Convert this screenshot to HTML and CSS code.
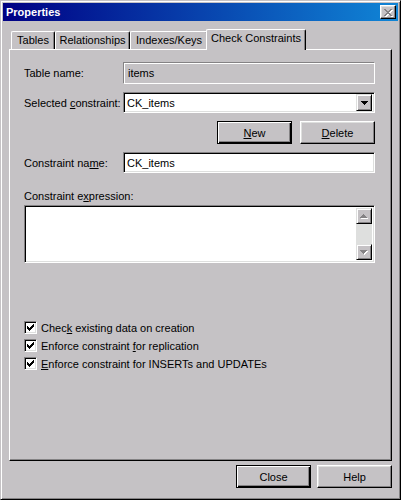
FILE: index.html
```html
<!DOCTYPE html>
<html lang="en">
<head>
  <meta charset="UTF-8">
  <title>Properties</title>
  <link rel="stylesheet" href="styles.css">
</head>
<body>

  <div class="window">
    <div class="titlebar">
      <span class="title">Properties</span>
      <span class="close-btn">
        <svg width="9" height="8" viewBox="0 0 9 8" shape-rendering="crispEdges">
          <path fill="#fff" transform="translate(1,1)" d="M0 0h2v1h-2z M6 0h2v1h-2z M1 1h2v1h-2z M5 1h2v1h-2z M2 2h4v1h-4z M3 3h2v1h-2z M2 4h4v1h-4z M1 5h2v1h-2z M5 5h2v1h-2z M0 6h2v1h-2z M6 6h2v1h-2z"/>
          <path fill="#848284" d="M0 0h2v1h-2z M6 0h2v1h-2z M1 1h2v1h-2z M5 1h2v1h-2z M2 2h4v1h-4z M3 3h2v1h-2z M2 4h4v1h-4z M1 5h2v1h-2z M5 5h2v1h-2z M0 6h2v1h-2z M6 6h2v1h-2z"/>
        </svg>
      </span>
    </div>

    <div class="tabs">
      <div class="tab tab-tables">Tables</div>
      <div class="tab tab-relationships">Relationships</div>
      <div class="tab tab-indexes">Indexes/Keys</div>
      <div class="tab tab-check active">Check Constraints</div>
    </div>

    <div class="panel">
      <div class="form-row row-tall">
        <label class="form-label">Table name:</label>
        <div class="field disabled">items</div>
      </div>

      <div class="form-row">
        <label class="form-label">Selected <u>c</u>onstraint:</label>
        <div class="field combo">
          <span class="combo-text">CK_items</span>
          <span class="combo-btn">
            <svg width="7" height="4" viewBox="0 0 7 4" shape-rendering="crispEdges">
              <path fill="#000" d="M0 0h7v1h-7z M1 1h5v1h-5z M2 2h3v1h-3z M3 3h1v1h-1z"/>
            </svg>
          </span>
        </div>
      </div>

      <div class="form-row button-row">
        <span class="btn default"><u>N</u>ew</span>
        <span class="btn"><u>D</u>elete</span>
      </div>

      <div class="form-row">
        <label class="form-label">Constraint na<u>m</u>e:</label>
        <div class="field">CK_items</div>
      </div>

      <label class="block-label">Constraint e<u>x</u>pression:</label>
      <div class="field textarea">
        <div class="scrollbar">
          <span class="scroll-btn">
            <svg width="8" height="5" viewBox="0 0 8 5" shape-rendering="crispEdges">
              <path fill="#fff" transform="translate(1,1)" d="M3 0h1v1h-1z M2 1h3v1h-3z M1 2h5v1h-5z M0 3h7v1h-7z"/>
              <path fill="#848284" d="M3 0h1v1h-1z M2 1h3v1h-3z M1 2h5v1h-5z M0 3h7v1h-7z"/>
            </svg>
          </span>
          <span class="scroll-track"></span>
          <span class="scroll-btn">
            <svg width="8" height="5" viewBox="0 0 8 5" shape-rendering="crispEdges">
              <path fill="#fff" transform="translate(1,1)" d="M0 0h7v1h-7z M1 1h5v1h-5z M2 2h3v1h-3z M3 3h1v1h-1z"/>
              <path fill="#848284" d="M0 0h7v1h-7z M1 1h5v1h-5z M2 2h3v1h-3z M3 3h1v1h-1z"/>
            </svg>
          </span>
        </div>
      </div>

      <div class="checks">
        <div class="check-row">
          <span class="checkbox">
            <svg width="7" height="7" viewBox="0 0 7 7" shape-rendering="crispEdges">
              <path fill="#000" d="M6 0h1v1h-1z M5 1h2v1h-2z M0 2h1v1h-1z M4 2h3v1h-3z M0 3h2v1h-2z M3 3h3v1h-3z M0 4h5v1h-5z M1 5h3v1h-3z M2 6h1v1h-1z"/>
            </svg>
          </span>
          <span>Chec<u>k</u> existing data on creation</span>
        </div>
        <div class="check-row">
          <span class="checkbox">
            <svg width="7" height="7" viewBox="0 0 7 7" shape-rendering="crispEdges">
              <path fill="#000" d="M6 0h1v1h-1z M5 1h2v1h-2z M0 2h1v1h-1z M4 2h3v1h-3z M0 3h2v1h-2z M3 3h3v1h-3z M0 4h5v1h-5z M1 5h3v1h-3z M2 6h1v1h-1z"/>
            </svg>
          </span>
          <span>Enforce constraint <u>f</u>or replication</span>
        </div>
        <div class="check-row">
          <span class="checkbox">
            <svg width="7" height="7" viewBox="0 0 7 7" shape-rendering="crispEdges">
              <path fill="#000" d="M6 0h1v1h-1z M5 1h2v1h-2z M0 2h1v1h-1z M4 2h3v1h-3z M0 3h2v1h-2z M3 3h3v1h-3z M0 4h5v1h-5z M1 5h3v1h-3z M2 6h1v1h-1z"/>
            </svg>
          </span>
          <span><u>E</u>nforce constraint for INSERTs and UPDATEs</span>
        </div>
      </div>
    </div>

    <div class="footer">
      <span class="btn default">Close</span>
      <span class="btn">Help</span>
    </div>
  </div>

</body>
</html>
```

FILE: styles.css
```css
* {
  box-sizing: border-box;
}

body {
  margin: 0;
  font-family: "Liberation Sans", Arial, sans-serif;
  font-size: 11px;
  color: #000;
  background: #c5c2c5;
}

u {
  text-decoration-thickness: 1px;
  text-underline-offset: 1px;
}

/* window frame */
.window {
  width: 401px;
  height: 500px;
  display: flex;
  flex-direction: column;
  padding: 2px;
  background: #c5c2c5;
  border: 1px solid;
  border-color: #c5c2c5 #000 #000 #c5c2c5;
  box-shadow: inset 1px 1px #fff, inset -1px -1px #848284;
}

.titlebar {
  height: 18px;
  flex: none;
  display: flex;
  align-items: center;
  justify-content: space-between;
  padding: 0 2px 0 3px;
  background: linear-gradient(to right, #000084, #1085d6);
  color: #fff;
}

.title {
  font-weight: bold;
  font-size: 11px;
}

.close-btn {
  width: 16px;
  height: 14px;
  display: flex;
  align-items: center;
  justify-content: center;
  padding: 1px 0 0 1px;
  background: #c5c2c5;
  border: 1px solid;
  border-color: #fff #000 #000 #fff;
  box-shadow: inset -1px -1px #848284, inset 1px 1px #dedfde;
}

/* tabs */
.tabs {
  display: flex;
  align-items: flex-end;
  height: 20px;
  flex: none;
  margin: 8px 0 0 8px;
}

.tab {
  flex: none;
  height: 18px;
  padding-top: 2px;
  line-height: 13px;
  text-align: center;
  border: 1px solid;
  border-bottom: none;
  border-color: #fff #000 #000 #fff;
  border-radius: 2px 2px 0 0;
  box-shadow: inset -1px 0 #848284;
  background: #c5c2c5;
}

.tab-tables { width: 44px; }
.tab-relationships { width: 75px; }
.tab-indexes { width: 78px; }
.tab-check { width: 96px; }

.tab.active {
  position: relative;
  z-index: 1;
  width: 100px;
  height: 21px;
  margin: 0 0 -1px -2px;
}

/* tab page */
.panel {
  height: 412px;
  flex: none;
  margin: 0 6px 0 6px;
  padding: 12px 16px 0 14px;
  border: 1px solid;
  border-color: #fff #000 #000 #fff;
  box-shadow: inset -1px -1px #848284;
}

.form-row {
  display: flex;
  align-items: center;
  height: 21px;
  margin-bottom: 8px;
}

.row-tall {
  height: 22px;
}

.form-label {
  width: 99px;
  flex: none;
}

.field {
  flex: 1;
  height: 100%;
  display: flex;
  align-items: center;
  padding: 0 2px 0 3px;
  background: #fff;
  border: 1px solid;
  border-color: #848284 #fff #fff #848284;
  box-shadow: inset 1px 1px #000, inset -1px -1px #dedfde;
}

.field.disabled {
  padding-left: 4px;
  background: #c5c2c5;
  box-shadow: inset 1px 1px #fff, inset -1px -1px #c5c2c5;
}

.combo {
  padding: 2px;
}

.combo-text {
  flex: 1;
  padding-left: 1px;
}

.combo-btn {
  width: 16px;
  height: 17px;
  display: flex;
  align-items: center;
  justify-content: center;
  padding-top: 1px;
  background: #c5c2c5;
  border: 1px solid;
  border-color: #dedfde #000 #000 #dedfde;
  box-shadow: inset 1px 1px #fff, inset -1px -1px #848284;
}

.button-row {
  height: 23px;
  justify-content: flex-end;
  gap: 8px;
}

.btn {
  width: 75px;
  height: 23px;
  display: flex;
  align-items: center;
  justify-content: center;
  background: #c5c2c5;
  border: 1px solid;
  border-color: #fff #000 #000 #fff;
  box-shadow: inset -1px -1px #848284, inset 1px 1px #dedfde;
}

.btn.default {
  border-color: #000;
  box-shadow: inset 1px 1px #fff, inset -1px -1px #000, inset -2px -2px #848284;
}

.block-label {
  display: block;
  line-height: 13px;
  margin-top: 17px;
}

.textarea {
  flex: none;
  height: 58px;
  margin-top: 2px;
  justify-content: flex-end;
  align-items: stretch;
  padding: 2px;
}

.scrollbar {
  width: 16px;
  display: flex;
  flex-direction: column;
}

.scroll-btn {
  height: 16px;
  flex: none;
  display: flex;
  align-items: center;
  justify-content: center;
  background: #c5c2c5;
  border: 1px solid;
  border-color: #dedfde #000 #000 #dedfde;
  box-shadow: inset 1px 1px #fff, inset -1px -1px #848284;
}

.scroll-track {
  flex: 1;
  background: #dedfde;
}

/* checkboxes */
.checks {
  display: flex;
  flex-direction: column;
  gap: 5px;
  margin-top: 58px;
}

.check-row {
  display: flex;
  align-items: center;
  gap: 4px;
  height: 13px;
}

.checkbox {
  width: 13px;
  height: 13px;
  flex: none;
  display: flex;
  align-items: center;
  justify-content: center;
  background: #fff;
  border: 1px solid;
  border-color: #848284 #fff #fff #848284;
  box-shadow: inset 1px 1px #000, inset -1px -1px #dedfde;
}

.footer {
  display: flex;
  justify-content: flex-end;
  gap: 6px;
  margin: 4px 6px 0 0;
}
```
